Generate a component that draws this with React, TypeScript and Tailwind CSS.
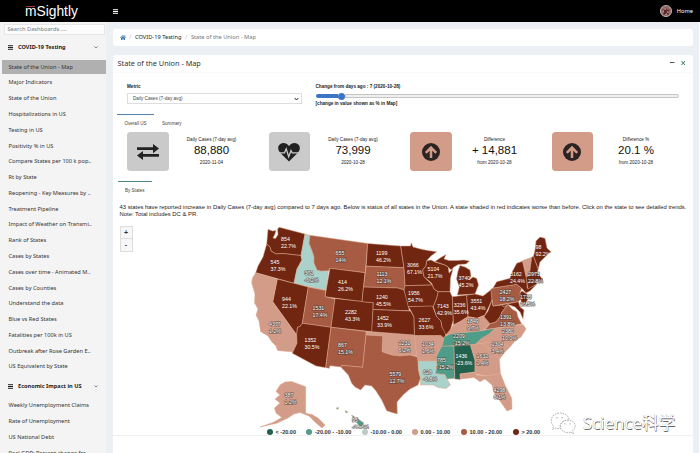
import React from "react";

const DARK = "#702611";
const MID = "#a65b42";
const LIGHT = "#d39c88";
const PALE = "#abd2ca";
const TEAL = "#4f9c88";
const DEEP = "#23614f";

type Shape = [string, string];

const shapes: Shape[] = [
  [DARK, "268,229.3 272.5,231 276,230.5 275,234 273,238 275.5,238.5 278,234.5 277.5,229 279.3,227.3 305,234 301,255.5 283,253.5 276,254 271,251 270,247 266.7,244"],
  [DARK, "266.7,244 270,247 271,251 276,254 283,253.5 301,255.5 302,260 297,269 294,283.3 255.7,272.7 258,266 263,257"],
  [PALE, "305,234 310,235.3 309,243.3 311.7,250 314,256.5 314,263 317,270 321,271 328.6,270 325.7,290.5 294,283.3 297,269 302,260 301,255.5"],
  [MID, "310,235.3 367.7,243.5 365.3,272.7 330,268.3 328.6,270.7 321,271 317,270 314,263 314,256.5 311.7,250 309,243.3"],
  [DARK, "330,268.3 365,272.7 362,301.7 325,296.7"],
  [DARK, "277.3,279 308.3,287 302.3,323.3 299.5,327 297.5,327 296.7,335 272.7,301.7"],
  [LIGHT, "255.7,272.7 277.3,279 272.7,301.7 296.7,335 297,343.3 293.3,352 277.5,350.5 276,346 271.7,341.7 268,336 260.7,331.7 259,321 256,315 258,309 254.5,303 255,294 251.7,283 252.5,278"],
  [MID, "308.3,287 325.7,290.5 325,296.7 335,299 331,327.3 302.3,323.3"],
  [DARK, "335,298.5 373.3,302.7 372,331.7 331,327.3"],
  [DARK, "302.3,323.3 331,327.3 325.7,367.7 316,366 292.3,353.3 297,343.3 296.7,335 297.5,327 299.5,327"],
  [MID, "331,327.3 366.3,331.5 362.7,367.3 341.7,365.3 341,367 330,365.7 329.3,368.3 325.7,367.7"],
  [LIGHT, "366.3,331.5 414.5,335 416.7,356 410,355 400,356 391.7,355 382,351.7 382.7,336 366,335"],
  [MID, "366,335 382.7,336 382,351.7 391.7,355 400,356 410,355 418,357 418.5,370 420.5,378 418,385 410,389 403,395 397,402 397.3,414 392,412.5 386.7,410.7 381.7,400 376,391 371.7,386 365,385 360.7,390 355,387 351.7,383.3 348.3,375 341,367.3 341.7,365.3 362.7,367.3"],
  [DARK, "367.7,243.5 400.7,246 404,267.7 366.2,266.2"],
  [MID, "366.2,266.2 404,267.7 405,285.7 404,290 398,288 363.5,287"],
  [DARK, "363.5,287 398,288 404,290 407,299 409.3,310.8 373,309.5 373.3,302.7 362,301.7"],
  [DARK, "373,309.5 410.5,311 414,317 414.5,335 371.7,331.7"],
  [DARK, "400.7,246 410.5,246 411.3,242.7 413,247 421.7,249.3 428,250.5 436.7,251.7 431,256 426.7,260.7 426,266 422.7,270 424,276.7 432.3,285 405,285.7 404,267.7"],
  [DARK, "405,285.7 432.3,285 434,289 438.3,292 436.7,298.3 433.3,306.7 408.3,306.7 404,290"],
  [DARK, "408.3,306.7 432.5,306 436.7,316.7 441,321 442,327 446,333 445,338 441.5,338.5 441,335.7 414.5,335.7 414,317 411,311"],
  [DARK, "426.7,260.7 431,260 435,262 445,265 448.3,267 449,273 453,269 450.5,278 450,291.7 438.3,291.7 434,289 431.7,283.3 424,276.7 422.7,270 426,266"],
  [DARK, "438.3,291.7 450,291.7 452.3,296.7 453.3,320 450,331.7 446,335 442,327 441,321 436.7,316.7 433.3,306.7 436.7,298.3"],
  [DARK, "435,261.5 440,258 446,254.5 444,259 449,260.5 456.7,260.5 464,260 469.5,261 466,264 458.3,264.5 454,267 451,270 448.3,267 445,265"],
  [DARK, "460,265.5 465,267 470,270 471,276 469,280 473,277 476.7,278.5 478.5,285 475,294 457.3,295 459.3,287 456.5,279 458,271"],
  [DARK, "452.3,296.7 466.7,295 468,316.7 460,321.7 453.3,325 453.3,320"],
  [DARK, "466.7,295 475,294 483,296 491.7,289.3 492,300 485,315 477,318.3 468,316.7"],
  [LIGHT, "445,336 450,330 453.3,325 460,321.7 468,316.7 477,318.3 485,315.5 487,320 490,323.3 485,329.3 480,331 450,334"],
  [DARK, "492,300 493,306 501.7,305 504,307 508,304.5 502,312 500,317 496,322 490,323.8 484,316.7 488,311"],
  [MID, "508,304.5 512,309 516.7,311.7 518,317 521.7,324 485,329.8 490,323.8 496,322 500,317 502,312"],
  [MID, "490.7,289.3 493,288 516.7,284.3 521.7,288.3 520,293 522.7,297 518.3,301.7 493,306"],
  [DARK, "493,288 496.7,281.7 510,278.3 511,274 516.7,263.3 523.3,261 526.7,278 527.3,288.3 536,285 530,291 526,293 521.7,288.3 516.7,284.3"],
  [LIGHT, "522.3,260.7 531.7,257.3 529.3,275 526,276.7"],
  [DARK, "531.7,257.3 533.5,256 538.3,269 537,273 529.3,275"],
  [DARK, "533.5,256 535,250 536,241 540,237 545,238.3 547,248 551,252 545,257 540,262 538.3,269"],
  [DARK, "526,276.7 537,273 540,276 543,280 541,282 535,281 527,283"],
  [DARK, "527,283 535,281 537,284 528,289"],
  [DARK, "520,293 522,291 527,294 527.5,300 524,306 521,301"],
  [DARK, "501.7,305 518.5,301.7 520,307 524,310 523,319 520,312 515,307 508,304.5 504,307"],
  [LIGHT, "485,329.8 523,324.5 526,329 521,337 515,341 510,347 501,343 489,342 475,344.5 482,338"],
  [LIGHT, "482,343.5 489,342 501,343 510,347 505,352 499.3,359.3 491,351"],
  [TEAL, "444,337 450,334 480,331 495,328.3 489,334 482,338 475,344.5 441.7,346.5"],
  [LIGHT, "414.5,335.7 441,335.7 444,338 441.7,346.5 436.5,356 436.5,361 418,361 416.7,356"],
  [PALE, "418,361 436.5,361 437,366 435.5,373.5 445,374.5 447,379 450.5,385 446,388.5 438,387.5 433.3,385 420.5,385 420.5,378 418.5,370"],
  [TEAL, "441.7,346.3 454,346 454.5,378.3 447,379 445,374.5 435.5,373.5 437,366 436.5,356"],
  [DEEP, "454,346 470.5,345 475,360 475,372 460,374 460.5,379.5 454.8,379"],
  [LIGHT, "470.5,345 482,343.5 491,351 499.3,359.3 500.5,373.5 488.3,376 475,374 475,360"],
  [LIGHT, "460,374 475,372.5 476,375 488.3,376 500.5,373.5 505,385 511.7,398.3 512,409 507,411 500,401 494,393 492,385 485,379 480,381.7 474,377.5 460.5,379"],
  [LIGHT, "280,385 285,382 291.7,381.5 305.7,386.7 305.7,413.3 312,414.5 318.3,418.3 325,425 322,428 316,423 309,416 300,412.5 294,414 288,418 276.7,423.3 260,427 273,422.5 281.7,417.5 276,413 274.5,408 280,403 275,399 280,395 276,391.5"],
  [TEAL, "357,418 361,421 364,423 361,427 357,423"],
  [TEAL, "351.5,415 355,417 353,418"],
  [TEAL, "345,410.5 348,412 346,413"],
  [TEAL, "336,408 338.5,407.5 338,409.5"],
];

type Label = [number, number, string, string, boolean];

const labels: Label[] = [
  [281, 241, "854", "22.7%", false],
  [270.5, 264, "545", "37.3%", false],
  [304.5, 275, "371", "-6.2%", true],
  [335.5, 254.5, "655", "14%", true],
  [376, 254.8, "1199", "46.2%", false],
  [376.5, 276, "1113", "12.1%", true],
  [338, 284, "414", "26.2%", false],
  [282, 300.5, "944", "22.1%", false],
  [312.5, 310.3, "1531", "17.4%", true],
  [345, 314, "2282", "43.3%", false],
  [376, 298.5, "1240", "45.5%", false],
  [377, 320.2, "1452", "33.9%", false],
  [269, 325.5, "4377", "1.2%", true],
  [304.5, 342.3, "1352", "30.5%", false],
  [338, 347.2, "867", "15.1%", true],
  [398.5, 344.5, "1231", "6.2%", true],
  [389.5, 375.5, "5579", "12.7%", true],
  [407, 267.3, "3066", "67.1%", false],
  [427.5, 271, "5104", "21.7%", false],
  [408, 295, "1956", "54.7%", false],
  [418.5, 322.2, "2627", "33.6%", false],
  [437, 308, "7143", "42.9%", false],
  [453.7, 307, "3236", "35.6%", false],
  [458.5, 280, "3740", "45.2%", false],
  [470.5, 303, "3551", "43.4%", false],
  [467, 323.3, "1849", "9.7%", true],
  [510, 275.5, "3162", "24.4%", false],
  [499.5, 294, "2427", "18.2%", true],
  [528, 275.5, "2973", "22.8%", true],
  [520, 298.5, "1735", "26.5%", true],
  [535.5, 249.2, "98", "92.2%", false],
  [500, 318.5, "1391", "13.8%", true],
  [502, 333, "2380", "10.0%", true],
  [491.5, 345.7, "1304", "3.4%", true],
  [453, 338, "2209", "-15.2%", true],
  [422, 346, "1034", "1.6%", true],
  [437, 361.5, "785", "-15.2%", true],
  [455.5, 358.3, "1436", "-23.6%", false],
  [476.5, 358.3, "1632", "1.4%", true],
  [423, 374, "628", "-6.8%", true],
  [493.5, 391.5, "4298", "6.1%", true],
  [284.5, 396.5, "387", "1.2%", true],
  [352, 421.5, "95", "-18.6%", true],
];

const covid = [
  "State of the Union - Map", "Major Indicators", "State of the Union", "Hospitalizations in US", "Testing in US",
  "Positivity % in US", "Compare States per 100 k pop..", "Rt by State", "Reopening - Key Measures by ..", "Treatment Pipeline",
  "Impact of Weather on Transmi..", "Rank of States", "Cases by States", "Cases over time - Animated M..", "Cases by Counties",
  "Understand the data", "Blue vs Red States", "Fatalities per 100k in US", "Outbreak after Rose Garden E..", "US Equivalent by State",
];
const economy = ["Weekly Unemployment Claims", "Rate of Unemployment", "US National Debt", "Real GDP: Percent change fro.."];

function Bars({ className }: { className: string }) {
  return (
    <svg viewBox="0 0 12 10" className={className} fill="currentColor">
      <rect width="12" height="2.2" />
      <rect y="3.9" width="12" height="2.2" />
      <rect y="7.8" width="12" height="2.2" />
    </svg>
  );
}

function Group({ title }: { title: string }) {
  return (
    <div className="flex h-[23px] items-center pl-[7.5px] pr-[8px] text-[#222]">
      <Bars className="h-[5px] w-[5.5px]" />
      <span className="ml-[5px] flex-1 text-[5.6px] font-bold">{title}</span>
      <svg viewBox="0 0 10 6" className="h-[2.5px] w-[4px]" fill="none" stroke="#444" strokeWidth="1.6">
        <path d="M1 1l4 4 4-4" />
      </svg>
    </div>
  );
}

function Item({ text, active }: { text: string; active?: boolean }) {
  return (
    <div className="flex h-[15.79px] items-center pl-[2px]">
      <div className={`flex h-[14px] w-[103.5px] items-center pl-[6.5px] text-[5.65px] whitespace-nowrap text-[#333] ${active ? "bg-[#b0b0b0]" : ""}`}>
        {text}
      </div>
    </div>
  );
}

function ArrowUp() {
  return (
    <svg viewBox="0 0 18 18" className="h-[18px] w-[18px]">
      <circle cx="9" cy="9" r="9" fill="#2b2422" />
      <path d="M9 15V5M3.800 9.800L9 4.600l5.200 5.200" fill="none" stroke="#d39c88" strokeWidth="2.500" />
    </svg>
  );
}

function Exchange() {
  return (
    <svg viewBox="0 0 22 16" className="h-[16px] w-[22px]" fill="#222">
      <path d="M0 3.2h16V0l6 4.6-6 4.6V6H0zM22 10H6V6.9L0 11.4 6 16v-3.2h16z" />
    </svg>
  );
}

function Heart() {
  return (
    <svg viewBox="0 0 22 19" className="h-[19px] w-[22px]">
      <path d="M11 18.6L2.400 10C-.6 7-.4 3 2 1.300 5 -.8 8.600 0 11 3 13.400 0 17 -.8 20 1.300c2.400 1.700 2.600 5.700-.4 8.700z" fill="#222" />
      <path d="M0 9.800h6.500l1.700-4 2.500 8 2.300-6.300 1.200 2.300H22" fill="none" stroke="#cacaca" strokeWidth="1.300" />
    </svg>
  );
}

function Stat({ icon, warm, top, value, sub }: { icon: React.ReactNode; warm?: boolean; top: string; value: string; sub: string }) {
  return (
    <div className="flex w-[141.5px]">
      <div className={`flex h-[39.5px] w-[41.5px] items-center justify-center rounded-[3.5px] pt-[2px] ${warm ? "bg-[#d39c88]" : "bg-[#cacaca]"}`}>{icon}</div>
      <div className="flex w-[86px] flex-col items-center text-[4.65px] text-[#222]">
        <div className="mt-[5px] h-[6px] leading-[6px]">{top}</div>
        <div className="h-[14px] text-[11.5px] leading-[14px] text-[#111]">{value}</div>
        <div className="mt-[3px] leading-[6px]">{sub}</div>
      </div>
    </div>
  );
}

function Legend({ color, text, width }: { color: string; text: string; width: string }) {
  return (
    <div className={`flex items-center ${width}`}>
      <span className="h-[6px] w-[6px] shrink-0 rounded-full" style={{ background: color }} />
      <span className="ml-[3px] whitespace-nowrap">{text}</span>
    </div>
  );
}

function UsMap() {
  return (
    <svg viewBox="113 220 580 209" className="block h-[209px] w-[580px]">
      {shapes.map(([fill, points], i) => (
        <polygon key={i} points={points} fill={fill} stroke="#dca58c" strokeWidth="0.5" strokeLinejoin="round" />
      ))}
      <g fontSize="5.3" fill="#fff" fontFamily="Liberation Sans, Arial, sans-serif">
        {labels.map(([x, y, a, b, outlined], i) => (
          <g key={i} stroke={outlined ? "#3b3431" : "none"} strokeWidth="1.1" strokeOpacity="0.75" paintOrder="stroke">
            <text x={x} y={y}>{a}</text>
            <text x={x} y={y + 7}>{b}</text>
          </g>
        ))}
      </g>
    </svg>
  );
}

export default function App() {
  return (
    <div className="relative flex h-[453px] w-[700px] flex-col overflow-hidden bg-white font-['Noto_Sans','Open_Sans',sans-serif] text-[#333]">
      <header className="flex h-[22px] shrink-0 items-center bg-black text-white">
        <div className="w-[105px] pl-[25px] text-[13.8px] leading-[20px]">
          <span className="relative font-['Liberation_Sans',Arial,sans-serif]">
            mSightly
            <span className="absolute left-[1px] top-[2px] h-[1px] w-[9px] bg-[#a33b32]" />
          </span>
        </div>
        <Bars className="ml-[7.5px] h-[5px] w-[5.5px]" />
        <div className="flex-1" />
        <svg viewBox="0 0 12 12" className="h-[12px] w-[12px]">
          <circle cx="6" cy="6" r="5.6" fill="#946b66" stroke="#ddd" strokeWidth="0.7" />
          <path d="M2 4l3 1 1-3 1 3 3-1-2 3 1 3-3-1-3 1 1-3z" fill="#5a2929" />
          <path d="M3 6h1M7 7h1M5 4h1M6 9h1" stroke="#dfc5bd" />
        </svg>
        <span className="ml-[4.5px] mr-[7px] text-[5.7px]">Home</span>
      </header>

      <div className="flex min-h-0 flex-1">
        <aside className="w-[105.5px] shrink-0 overflow-hidden bg-[#f4f4f4]">
          <div className="ml-[4px] mt-[2px] flex h-[11px] w-[101px] items-center border border-[#e6e6e6] bg-[#fcfcfc] pl-[2.5px] text-[5.7px] text-[#777]">
            Search Dashboards ....
          </div>
          <div className="mt-[1px]"><Group title="COVID-19 Testing" /></div>
          {covid.map((t, i) => <Item key={t} text={t} active={i === 0} />)}
          <Group title="Economic Impact in US" />
          {economy.map((t) => <Item key={t} text={t} />)}
        </aside>

        <main className="flex w-[593.5px] flex-col bg-[#ecf0f4] pl-[7.5px] pr-[6px]">
          <nav className="mt-[6.5px] flex h-[17px] shrink-0 items-center rounded-[3px] bg-white pl-[6.5px] text-[5.7px]">
            <svg viewBox="0 0 12 10" className="h-[5px] w-[6px]" fill="#3c77a8">
              <path d="M6 0l6 5-.7 1L6 1.6.7 6 0 5zM6 2.600l4 3.400v4H7V7H5v3H2V6zM9 .5h1.500v3L9 2z" />
            </svg>
            <span className="mx-[3.7px] text-[#bbb]">/</span>
            <span className="text-[#222]">COVID-19 Testing</span>
            <span className="mx-[3.7px] text-[#bbb]">/</span>
            <span className="text-[#777]">State of the Union - Map</span>
          </nav>

          <section className="mt-[9.5px] flex flex-1 flex-col rounded-t-[3px] bg-white">
            <div className="flex h-[17.5px] items-center border-b border-[#fafafa] pl-[4.5px] pr-[7px]">
              <h1 className="mt-[1px] flex-1 text-[7.3px] text-[#333]">State of the Union - Map</h1>
              <svg viewBox="0 0 16 6" className="h-[6px] w-[16px]" stroke="#357a6e" fill="none">
                <path d="M0 2.500h4.500" stroke="#555" />
                <path d="M11.500 1l3.500 4M15 1l-3.500 4" />
              </svg>
            </div>

            <div className="flex flex-col font-['Liberation_Sans',Arial,sans-serif]">
              <div className="flex h-[41px] pl-[14px] pt-[11px] text-[4.65px] leading-[6px] text-[#222]">
                <div className="w-[188.5px]">
                  <div className="font-bold">Metric</div>
                  <div className="mt-[3.5px] flex h-[11px] w-[174.500px] items-center border border-[#ddd] pl-[5px] pr-[2px] text-[#444]">
                    <span className="flex-1">Daily Cases (7-day avg)</span>
                    <svg viewBox="0 0 5 4" className="h-[4px] w-[5px]" fill="none" stroke="#222"><path d="M.7 1l1.800 2L4.300 1" /></svg>
                  </div>
                </div>
                <div className="w-[363.5px] font-bold">
                  <div>Change from days ago : 7 (2020-10-28)</div>
                  <div className="mt-[3px] flex h-[7px] items-center">
                    <div className="h-[3.5px] w-[22px] rounded-l-full bg-[#3c74c6]" />
                    <div className="h-[7px] w-[7px] rounded-full bg-[#3c74c6]" />
                    <div className="h-[3.5px] flex-1 rounded-r-full border border-[#c4c4c4] bg-[#efefef]" />
                  </div>
                  <div className="mt-[1px]">[change in value shown as % in Map]</div>
                </div>
              </div>

              <div className="flex h-[18px] pl-[4px] text-[4.6px] text-[#444]">
                <div className="h-[18px] w-[37px] border-t border-[#5580aa] pt-[5.5px] text-center leading-[7px]">Overall US</div>
                <div className="ml-[8px] pt-[6.5px] leading-[7px]">Summary</div>
              </div>

              <div className="flex h-[49px] pl-[14px]">
                <Stat icon={<Exchange />} top="Daily Cases (7-day avg)" value="88,880" sub="2020-11-04" />
                <Stat icon={<Heart />} top="Daily Cases (7-day avg)" value="73,999" sub="2020-10-28" />
                <Stat icon={<ArrowUp />} warm top="Difference" value="+ 14,881" sub="from 2020-10-28" />
                <Stat icon={<ArrowUp />} warm top="Difference %" value="20.1 %" sub="from 2020-10-28" />
              </div>

              <div className="flex h-[23.5px] pl-[4.5px] text-[4.6px] text-[#444]">
                <div className="w-[34.5px] border-t border-[#4f8585] pt-[5.5px] text-center leading-[7px]">By States</div>
              </div>

              <p className="h-[16px] pl-[6.5px] text-[5.88px] leading-[6.7px] whitespace-nowrap text-[#222]">
                43 states have reported increase in Daily Cases (7-day avg) compared to 7 days ago. Below is status of all states in the Union. A state shaded in red indicates worse than before. Click on the state to see detailed trends.
                <br />
                Note: Total includes DC &amp; PR.
              </p>

              <div className="relative h-[209px]">
                <UsMap />
                <div className="absolute left-[6.5px] top-[6px] flex w-[13px] flex-col text-center text-[7px] font-bold leading-[12px]">
                  <button className="h-[13px] border border-[#ddd] bg-[#f7f7f7]">+</button>
                  <button className="h-[13px] border border-t-0 border-[#ddd] bg-[#f7f7f7]">-</button>
                </div>
              </div>

              <div className="flex h-[7px] items-center border-b border-[#f0f0f0] pl-[153.5px] text-[5.55px] font-bold leading-[6px] text-[#333]">
                <Legend color={DEEP} text="< -20.00" width="w-[39.5px]" />
                <Legend color={TEAL} text="-20.00 - -10.00" width="w-[55.5px]" />
                <Legend color="#bccbc8" text="-10.00 - 0.00" width="w-[50px]" />
                <Legend color={LIGHT} text="0.00 - 10.00" width="w-[49px]" />
                <Legend color={MID} text="10.00 - 20.00" width="w-[52px]" />
                <Legend color={DARK} text="> 20.00" width="w-[40px]" />
              </div>
            </div>
          </section>
        </main>
      </div>

      <div className="absolute left-[550px] top-[409px] flex items-center">
        <svg viewBox="0 0 31 27" className="h-[24px] w-[27px]" fill="#fff" stroke="#999" strokeWidth="0.8" strokeDasharray="2 1">
          <path d="M7 19l-4 2 1-4C-1 12 1 3 11 2c7 0 11 4 11 8-8 0-12 5-10 10-2 0-4 0-5-1z" />
          <path d="M24 24c-8 2-13-3-12-8 2-7 15-8 17 0 0 3-1 5-3 6l1 4z" />
          <path d="M8 7v1M14 7v1M17 14v1M23 14v1" strokeWidth="1.5" />
        </svg>
        <span className="ml-[6px] font-['Noto_Sans','Noto_Sans_CJK_SC',sans-serif] text-[16.8px] leading-[27px] whitespace-nowrap text-white [text-shadow:0.6px_0.6px_0.5px_#666,-0.4px_-0.4px_0.5px_#bbb]">
          Science科学
        </span>
      </div>
    </div>
  );
}
